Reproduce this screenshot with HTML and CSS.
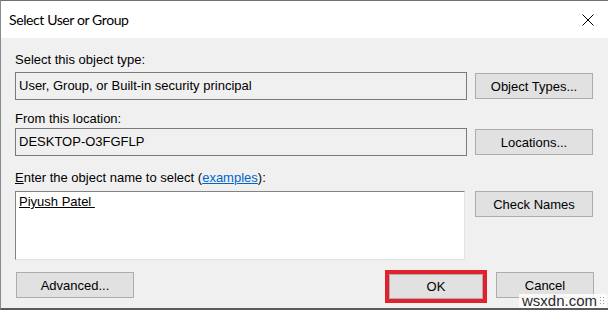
FILE: index.html
```html
<!DOCTYPE html>
<html lang="en">
<head>
  <meta charset="UTF-8">
  <meta name="viewport" content="width=device-width, initial-scale=1.0">
  <link rel="stylesheet" href="styles.css">
  <title>Select User or Group</title>
</head>
<body>
  <div id="dialog">
    <div class="titlebar">
      <span class="title">Select User or Group</span>
      <svg class="close" width="12" height="12" viewBox="0 0 12 12">
        <path d="M0.5 0.5 L11.5 11.5 M11.5 0.5 L0.5 11.5" stroke="#000" stroke-width="1" fill="none"/>
      </svg>
    </div>

    <div class="content">
      <div class="section first">
        <div class="label">Select this object type:</div>
        <div class="textbox">User, Group, or Built-in security principal</div>
        <button class="btn">Object Types...</button>
      </div>

      <div class="section second">
        <div class="label">From this location:</div>
        <div class="textbox">DESKTOP-O3FGFLP</div>
        <button class="btn">Locations...</button>
      </div>

      <div class="section third">
        <div class="label"><u>E</u>nter the object name to select (<a href="#">examples</a>):</div>
        <div class="textarea"><u>Piyush Patel&nbsp;</u></div>
        <button class="btn top">Check Names</button>
      </div>

      <div class="actions">
        <button class="btn">Advanced...</button>
        <span class="spacer"></span>
        <span class="highlight"><button class="btn">OK</button></span>
        <button class="btn">Cancel</button>
      </div>
    </div>

    <div class="watermark">wsxdn.com<span class="dots"></span></div>
  </div>
</body>
</html>
```

FILE: styles.css
```css
body {
  margin: 0;
  font-family: 'Liberation Sans', Arial, sans-serif;
  font-size: 13px;
  color: #000;
  background: #f0f0f0;
}

#dialog {
  position: relative;
  width: 608px;
  height: 310px;
  box-sizing: border-box;
  border-top: 1px solid #707070;
  border-left: 1px solid #8a8a8a;
  border-bottom: 2px solid #5a5a5a;
  background: #f0f0f0;
  display: flex;
  flex-direction: column;
}

.titlebar {
  height: 37px;
  background: #fff;
  display: flex;
  align-items: center;
  padding: 0 14px 0 8px;
}

.title {
  font-family: Lato, 'Noto Sans', sans-serif;
  font-size: 14px;
  letter-spacing: -0.4px;
  flex: 1;
}

.close {
  display: block;
  margin-top: 1px;
}

.content {
  padding: 14px 14px 0 14px;
}

.section {
  display: grid;
  grid-template-columns: 452px 118px;
  column-gap: 8px;
}

.section .label {
  grid-column: 1 / 3;
  height: 16px;
  line-height: 16px;
  margin-bottom: 4px;
}

.second {
  margin-top: 11px;
}

.second .label {
  margin-bottom: 1px;
}

.third {
  margin-top: 14px;
}

.third .label {
  margin-bottom: 5px;
}

.label a {
  color: #0066cc;
}

.textbox {
  height: 28px;
  box-sizing: border-box;
  border: 1px solid #7a7a7a;
  padding: 0 3px;
  line-height: 26px;
  white-space: nowrap;
}

.textarea {
  width: 450px;
  height: 69px;
  box-sizing: border-box;
  background: #fff;
  border-top: 1px solid #828282;
  border-left: 1px solid #828282;
  border-right: 1px solid #e3e3e3;
  border-bottom: 1px solid #e3e3e3;
  padding: 2px 3px;
  line-height: 16px;
}

.btn {
  font-family: 'Liberation Sans', Arial, sans-serif;
  font-size: 13px;
  color: #000;
  background: #e1e1e1;
  border: 1px solid #adadad;
  height: 26px;
  padding: 0;
  margin: 0;
}

.section .btn {
  margin-top: 1px;
  align-self: start;
}

.section .btn.top {
  margin-top: 0;
}

.actions {
  display: flex;
  align-items: flex-start;
  margin-top: 12px;
  padding-left: 1px;
}

.actions .btn {
  width: 118px;
}

.spacer {
  flex: 1;
}

.highlight {
  display: block;
  border: 4px solid #e3202b;
  margin-top: -2px;
  margin-right: 9px;
}

.highlight .btn {
  display: block;
  width: 94px;
  height: 25px;
}

.actions > .btn:last-child {
  width: 98px;
}

.watermark {
  position: absolute;
  right: 1px;
  bottom: 0;
  font-size: 15px;
  color: #2a2a2a;
  background: rgba(255, 255, 255, 0.8);
  padding: 0 1px 0 3px;
  line-height: 14px;
  display: flex;
  align-items: center;
  gap: 2px;
}

.dots {
  width: 7px;
  height: 10px;
  background-image: radial-gradient(#999 40%, transparent 45%);
  background-size: 3px 3px;
}
```
